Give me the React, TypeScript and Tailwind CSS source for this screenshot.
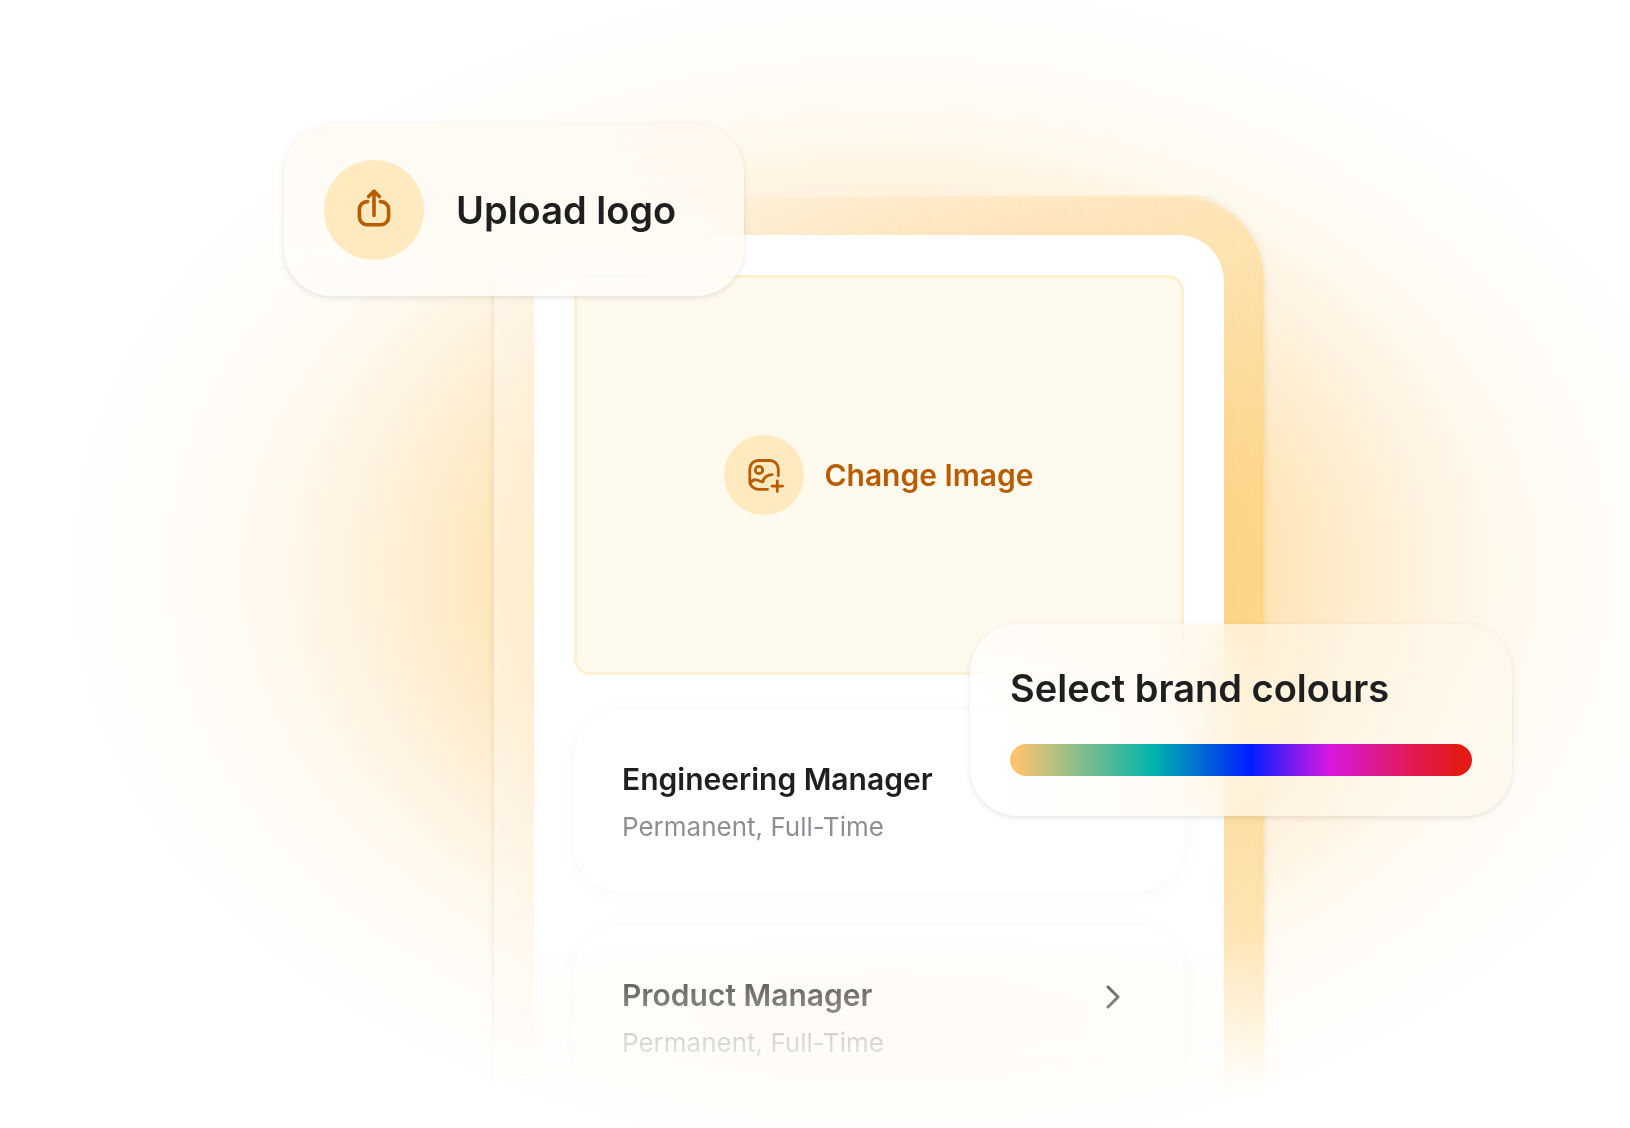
import React from 'react';

const jobs = [
  { id: 1, title: 'Engineering Manager', details: 'Permanent, Full-Time', open: false },
  { id: 2, title: 'Product Manager', details: 'Permanent, Full-Time', open: true }
];

function UploadIcon() {
  return (
    <svg className="w-12 h-12" viewBox="0 0 48 48" fill="none" stroke="currentColor" strokeWidth="3.6" strokeLinecap="round" strokeLinejoin="round" aria-hidden="true">
      <path d="M17.600 15.600h-.4a7.800 7.800 0 0 0-7.800 7.800v7.600a7.800 7.800 0 0 0 7.800 7.800h13.600a7.800 7.800 0 0 0 7.800-7.800v-7.600a7.800 7.800 0 0 0-7.800-7.800h-.4" />
      <path d="M24 29.500V5.600" />
      <path d="m18.600 10.600 5.400-5.400 5.400 5.400" />
    </svg>
  );
}

function ImagePlusIcon() {
  return (
    <svg className="w-10 h-10" viewBox="0 0 40 40" fill="none" stroke="currentColor" strokeWidth="2.8" strokeLinecap="round" strokeLinejoin="round" aria-hidden="true">
      <path d="M34.300 20.800v-6.900a8.400 8.400 0 0 0-8.400-8.400H14.200a8.400 8.400 0 0 0-8.400 8.400v12a8.400 8.400 0 0 0 8.400 8.400h9.400" />
      <circle cx="15" cy="15" r="3.700" />
      <path d="M6 28.400c1.800-2.800 4.600-4.200 7-3.400 2.300.8 3.600 1.600 5.800 1.800.6-4 4.800-7.200 9.400-7.200" />
      <path d="M33.300 25.800v10.600M28 31.100h10.600" />
    </svg>
  );
}

function ChevronIcon() {
  return (
    <svg className="w-4 h-7" viewBox="0 0 16 28" fill="none" stroke="currentColor" strokeWidth="3" strokeLinecap="round" strokeLinejoin="round" aria-hidden="true">
      <path d="m4 4 10 10L4 24" />
    </svg>
  );
}

function JobCard({ title, details, open }: { title: string; details: string; open: boolean }) {
  return (
    <a href="#" className="flex items-start justify-between h-[180px] pl-12 pr-16 pt-12 rounded-[48px] bg-white/90 shadow-[0_2px_24px_rgba(0,0,0,0.03)]">
      <div>
        <h3 className="text-[30px] leading-10 font-semibold text-[#1f1f1f]">{title}</h3>
        <p className="mt-2 text-[26px] leading-10 text-[#8e8e93]">{details}</p>
      </div>
      {open && (
        <span className="mt-2 text-[#1f1f1f]">
          <ChevronIcon />
        </span>
      )}
    </a>
  );
}

export default function App() {
  return (
    <main className="flex justify-center min-h-screen overflow-hidden pl-32 pt-[195px] bg-white bg-[radial-gradient(800px_570px_at_calc(50%+75px)_570px,#fcd692_0%,#fcda9b_35%,#fee4b3_46%,#feebca_56%,#fff2de_66%,#fff8ec_76%,#fffcf6_86%,#fffefc_98%,#ffffff_108%)] font-['Inter',sans-serif]">
      <div className="relative w-[770px] shrink-0">
        <section className="h-full p-10 pb-0 rounded-t-[84px] bg-linear-to-r from-[#fff9f0]/50 to-[#fab41e]/30 shadow-[0_0_6px_rgba(80,60,20,0.12),inset_0_2px_2px_rgba(255,255,255,0.3)] [mask-image:linear-gradient(to_bottom,black_735px,transparent_900px)] [mask-clip:no-clip]">
          <div className="flex flex-col gap-9 h-full px-10 pt-10 pb-5 rounded-t-[46px] bg-white">
            <button className="flex items-center justify-center gap-5 w-full h-[400px] rounded-2xl border-3 border-[#fff0d3] bg-[#fffaed] text-[#b85c00]">
              <span className="flex items-center justify-center w-20 h-20 rounded-full bg-[#ffeabf]">
                <ImagePlusIcon />
              </span>
              <span className="text-[30px] leading-10 font-semibold">Change Image</span>
            </button>

            {jobs.map((job) => (
              <JobCard key={job.id} title={job.title} details={job.details} open={job.open} />
            ))}
          </div>
        </section>

        <button className="absolute -top-[71px] -left-[210px] flex items-center gap-8 w-[460px] h-[172px] px-10 rounded-[48px] bg-linear-to-b from-[#fff9f0]/75 to-[#fffdfa]/65 backdrop-blur-2xl shadow-[0_2px_6px_rgba(0,0,0,0.1)]">
          <span className="flex items-center justify-center w-[100px] h-[100px] rounded-full bg-[#ffeabf] text-[#b85c00]">
            <UploadIcon />
          </span>
          <span className="text-[38px] leading-12 font-semibold text-[#1f1f1f]">Upload logo</span>
        </button>

        <div className="absolute top-[429px] -right-[248px] flex flex-col gap-8 w-[542px] h-[192px] px-10 pt-10 rounded-[48px] bg-linear-to-r from-white/60 via-[#fff8ec]/60 to-[#fff8ec]/60 backdrop-blur-2xl shadow-[0_2px_6px_rgba(0,0,0,0.1)]">
          <h2 className="text-[38px] leading-12 font-semibold text-[#1f1f1f]">Select brand colours</h2>
          <div className="h-8 rounded-full bg-[linear-gradient(to_right,#ffc46f_1%,#00b5ab_31%,#001eff_52%,#d818e2_69%,#e01a6a_84%,#e31a16_97%)]" />
        </div>
      </div>
    </main>
  );
}
